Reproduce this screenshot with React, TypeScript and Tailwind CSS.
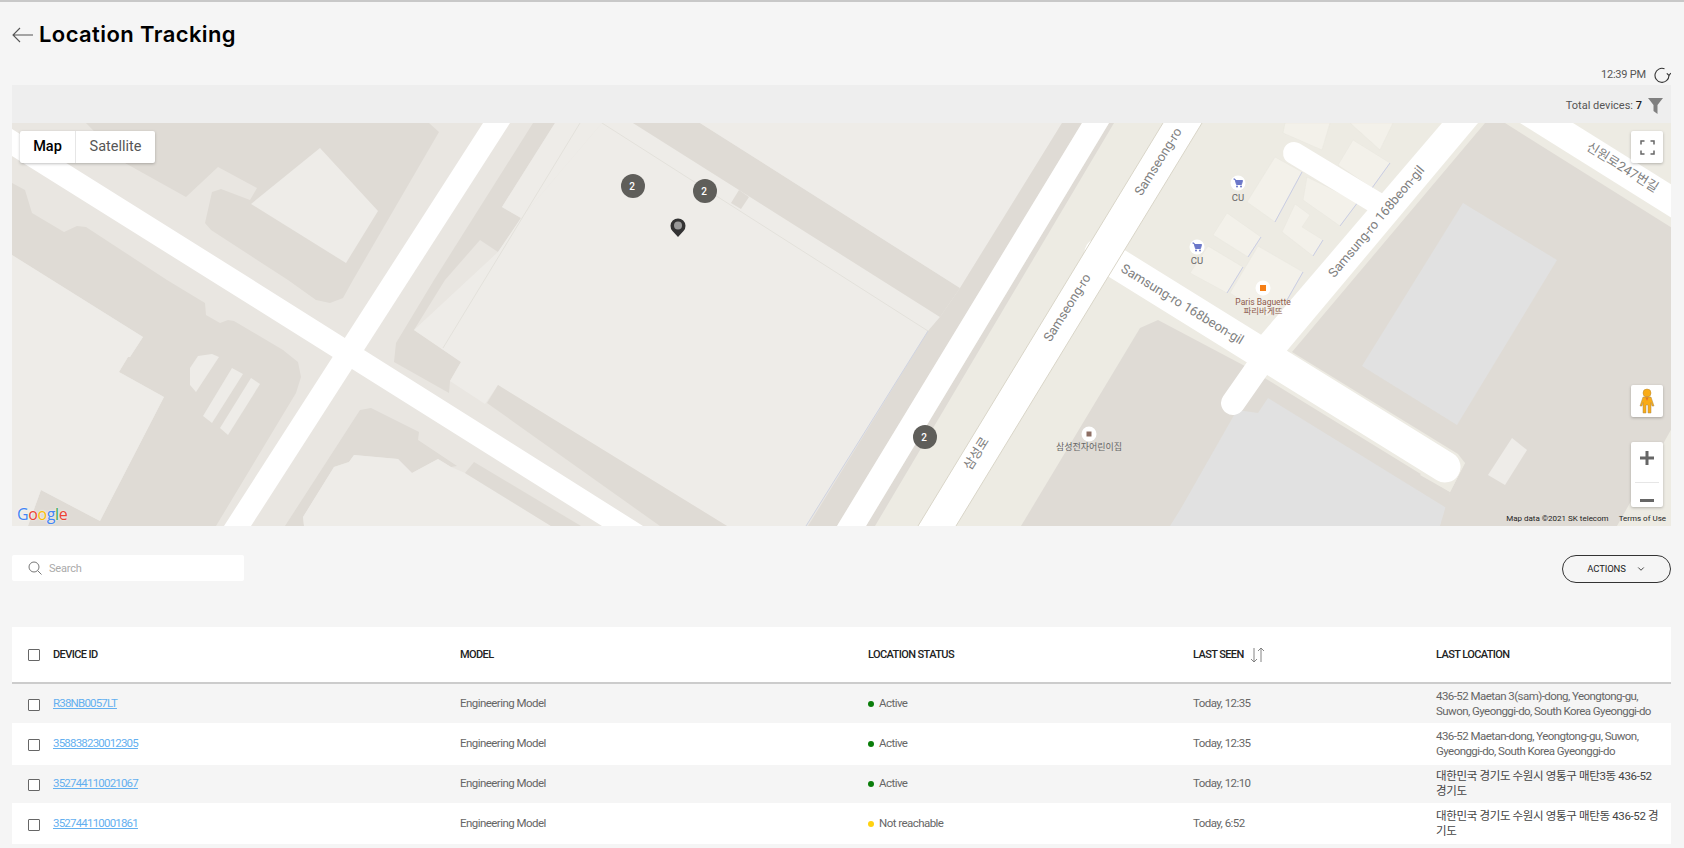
import { ChevronDown } from "lucide-react";

const DARK = "#dfdbd5";
const LIGHT = "#eeece8";
const BASE = "#e9e6e1";
const BLOCK = "#edebe3";
const BUILDING = "#f3f1ea";
const GREY = "#e1e1e1";

const mapShapes: [string, string][] = [
  [DARK, "86,123 429,123 439,132 353,280 343,298 330,303 316,300 288,280 211,230 205,223 212,192 221,189 250,200 257,188 218,167 186,197 125,163"],
  [LIGHT, "320,148 378,211 346,263 251,204"],
  [DARK, "12,183 25,190 32,213 64,232 77,226 86,227 167,280 205,303 206,315 220,323 228,320 234,321 283,350 298,362 301,377 296,393 216,526 28,526 41,490 100,521 164,397 119,372 128,357 130,357 143,337 12,255"],
  [LIGHT, "12,255 143,337 130,357 128,357 119,372 164,397 100,521 41,490 28,526 12,526"],
  [LIGHT, "190,368 198,356 212,354 219,357 196,392 190,385"],
  [LIGHT, "232,368 243,374 212,423 203,416"],
  [LIGHT, "251,378 260,384 228,435 220,428"],
  [DARK, "533,123 555,123 502,207 521,218 498,252 480,240 445,280 414,330 461,362 450,381 449,393 394,362 396,343 434,280"],
  [LIGHT, "555,123 602,123 521,218 502,207"],
  [LIGHT, "602,123 633,123 940,317 928,331 806,526 727,526 498,385 485,404 450,381 461,362 414,330 498,252 521,218"],
  [DARK, "633,123 700,123 960,288 940,317"],
  [DARK, "739,190 731,203 741,209 749,197"],
  [LIGHT, "700,123 1062,123 960,288"],
  [DARK, "1062,123 1082,123 837,526 808,526 928,331 940,317 960,288"],
  [DARK, "498,385 727,526 660,526 487,403"],
  [DARK, "371,408 360,410 285,526 304,526 303,517 334,467 349,462 354,455 398,459 412,473 438,459 451,467 457,466 418,440 419,432"],
  [LIGHT, "304,526 303,517 334,467 349,462 354,455 398,459 412,473 438,459 451,467 465,473 551,526"],
  [DARK, "474,462 465,473 551,526 581,526"],
  [BLOCK, "1109,123 1672,123 1672,526 866,526"],
  [DARK, "1109,123 1114,123 875,526 866,526"],
  [DARK, "1140,328 1158,320 1243,365 1263,377 1450,492 1446,526 1021,526"],
  [GREY, "1237,410 1258,413 1268,398 1453,512 1447,526 1170,526 1180,510"],
  [DARK, "1485,123 1505,123 1672,228 1672,428 1617,526 1440,526 1450,492 1465,463 1458,454 1292,352"],
  [GREY, "1463,203 1557,260 1457,425 1362,366"],
  [LIGHT, "1512,438 1527,450 1505,485 1488,475"],
  [BLOCK, "1440,450 1465,463 1450,492 1420,475"],
];

const buildings = [
  "1275,157 1302,172 1275,222 1247,202",
  "1307,177 1358,202 1340,226 1303,200",
  "1295,204 1310,215 1302,227 1323,240 1313,256 1282,232",
  "1227,213 1261,237 1248,257 1213,235",
  "1208,246 1243,267 1227,293 1190,273",
  "1258,246 1303,272 1287,300 1267,317 1230,293",
  "1285,123 1330,123 1322,150 1283,133",
  "1353,140 1390,163 1372,188 1338,165",
  "1350,123 1393,123 1380,150",
];

// the blue-grey shadow side of the buildings
const buildingShadows = "M1302 172L1275 222M1358 202L1340 226M1243 267L1227 293M1303 272L1287 300M1323 240L1313 256M1261 237L1248 257M1390 163L1372 188";

const roads = [
  "12,129 253,280 643,526 602,526 210,280 12,156",
  "483,123 510,123 251,526 224,526",
  "1082,123 1109,123 866,526 837,526",
  "1163,123 1202,123 956,526 918,526",
  "1442,123 1478,123 1285,353 1260,336",
  "1520,123 1573,123 1672,185 1672,218",
];

const clusters = [
  { x: 633, y: 186 },
  { x: 705, y: 191 },
  { x: 925, y: 437 },
];

const mapLabels = [
  { text: "Samseong-ro", x: 1159, y: 162, angle: -58 },
  { text: "Samseong-ro", x: 1068, y: 308, angle: -58 },
  { text: "Samsung-ro 168beon-gil", x: 1182, y: 305, angle: 31.5 },
  { text: "Samsung-ro 168beon-gil", x: 1377, y: 222, angle: -50 },
  { text: "신원로247번길", x: 1622, y: 168, angle: 32 },
  { text: "삼성로", x: 977, y: 454, angle: -58 },
];

function CartMarker({ x, y }: { x: number; y: number }) {
  return (
    <g transform={`translate(${x} ${y})`}>
      <circle r="7.5" fill="#fff" />
      <path d="M-4.5 -4H-3L-1.5 1.5H3.5L4.5 -2.5H-2.5" fill="#6b77c9" stroke="#6b77c9" strokeWidth="1" />
      <circle cx="-1" cy="3.5" r="1" fill="#6b77c9" />
      <circle cx="3" cy="3.5" r="1" fill="#6b77c9" />
    </g>
  );
}

function MapCanvas() {
  return (
    <svg viewBox="12 123 1659 403" className="block h-[403px] w-full font-['Roboto','Noto_Sans_CJK_KR',sans-serif]">
      <rect x="12" y="123" width="1659" height="403" fill={BASE} />
      {mapShapes.map(([fill, points], i) => (
        <polygon key={i} fill={fill} points={points} />
      ))}
      <path d="M928 331L806 526" stroke="#cfd3e0" strokeWidth="1" fill="none" />
      <path d="M602 123L928 331M580 123L443 348" stroke="#e3e1db" strokeWidth="1" fill="none" />
      {buildings.map((points) => (
        <polygon key={points} points={points} fill={BUILDING} stroke="#e8e6df" strokeWidth="0.5" />
      ))}
      <path d={buildingShadows} stroke="#c9cde4" strokeWidth="1" fill="none" />
      {roads.map((points) => (
        <polygon key={points} points={points} fill="#fff" />
      ))}
      <path d="M1100 253L1445 467" stroke="#fff" strokeWidth="31" strokeLinecap="round" fill="none" />
      <path d="M1270 350L1233 403" stroke="#fff" strokeWidth="24" strokeLinecap="round" fill="none" />
      <path d="M1294 153L1380 205" stroke="#fff" strokeWidth="22" strokeLinecap="round" fill="none" />
      <path d="M1163 123L918 526M1202 123L956 526" stroke="#d9d5c8" strokeWidth="1" fill="none" />

      {mapLabels.map((l) => (
        <text
          key={l.text + l.x}
          x={l.x}
          y={l.y}
          transform={`rotate(${l.angle} ${l.x} ${l.y})`}
          textAnchor="middle"
          dominantBaseline="middle"
          fontSize="13"
          fill="#808080"
        >
          {l.text}
        </text>
      ))}

      <CartMarker x={1238} y={183} />
      <text x="1238" y="201" textAnchor="middle" fontSize="9.5" fill="#666">CU</text>
      <CartMarker x={1197} y={247} />
      <text x="1197" y="264" textAnchor="middle" fontSize="9.5" fill="#666">CU</text>

      <circle cx="1263" cy="288" r="7.5" fill="#fff" />
      <rect x="1260" y="285" width="6" height="6" fill="#f57f17" />
      <text x="1263" y="305" textAnchor="middle" fontSize="8.5" fill="#8d5a4c">Paris Baguette</text>
      <text x="1263" y="314" textAnchor="middle" fontSize="8.5" fill="#8d5a4c">파리바게뜨</text>

      <circle cx="1089" cy="434" r="7.5" fill="#fff" />
      <rect x="1086.5" y="431.5" width="5" height="5" fill="#8d6e63" />
      <text x="1089" y="450" textAnchor="middle" fontSize="9" fill="#666">삼성전자어린이집</text>

      {clusters.map((c) => (
        <g key={c.x}>
          <circle cx={c.x} cy={c.y} r="12" fill="#5f5e5a" />
          <text x={c.x - 1} y={c.y + 3.5} textAnchor="middle" fontSize="10" fontWeight="500" fill="#fff">2</text>
        </g>
      ))}

      <path d="M678 237L672.5 231A7.5 7.5 0 1 1 683.5 231Z" fill="#333" />
      <circle cx="678" cy="225.5" r="4" fill="#999" />
    </svg>
  );
}

function MapControls() {
  return (
    <>
      <div className="absolute left-2 top-2 flex h-8 overflow-hidden rounded-[2px] bg-white text-[14.5px] shadow-[0_1px_3px_rgba(0,0,0,0.25)]">
        <span className="flex w-[56px] items-center justify-center border-r border-[#e6e6e6] font-medium text-black">Map</span>
        <span className="flex w-[79px] items-center justify-center text-[#565656]">Satellite</span>
      </div>

      <div className="absolute left-[1619px] top-2 flex h-8 w-8 items-center justify-center rounded-[2px] bg-white shadow-[0_1px_3px_rgba(0,0,0,0.25)]">
        <svg width="15" height="15" viewBox="0 0 15 15" fill="none" stroke="#666" strokeWidth="1.5">
          <path d="M1 4.5V1H4.5M10.5 1H14V4.5M14 10.5V14H10.5M4.5 14H1V10.5" />
        </svg>
      </div>

      <div className="absolute left-[1619px] top-[262px] flex h-8 w-8 items-center justify-center rounded-[2px] bg-white shadow-[0_1px_3px_rgba(0,0,0,0.25)]">
        <svg width="16" height="26" viewBox="0 0 16 26">
          <circle cx="8" cy="5" r="4" fill="#f9ab16" stroke="#b58a3a" strokeWidth="0.5" />
          <path d="M4 9H12L15 18H13L12 14.5V25H9V17H7V25H4V14.5L3 18H1Z" fill="#f9ab16" stroke="#a98a50" strokeWidth="0.5" />
          <path d="M6.5 9.5H9.5L8 13Z" fill="#e2762a" />
        </svg>
      </div>

      <div className="absolute left-[1619px] top-[319px] flex h-[65px] w-8 flex-col items-center rounded-[2px] bg-white shadow-[0_1px_3px_rgba(0,0,0,0.25)]">
        <div className="flex h-8 items-center justify-center">
          <svg width="14" height="14" viewBox="0 0 14 14" fill="#666">
            <path d="M5.5 0H8.5V5.5H14V8.5H8.5V14H5.5V8.5H0V5.5H5.5Z" />
          </svg>
        </div>
        <div className="mt-2 h-px w-6 bg-[#e6e6e6]" />
        <div className="flex flex-1 items-center justify-center pt-[10px]">
          <div className="h-[3px] w-[14px] bg-[#666]" />
        </div>
      </div>

      <div className="absolute left-[5px] top-[381px] text-[16px] font-medium leading-5 tracking-[-0.4px] [text-shadow:0_0_2px_#fff] font-['Open_Sans',sans-serif]">
        <span className="text-[#4285f4]">G</span>
        <span className="text-[#ea4335]">o</span>
        <span className="text-[#fbbc05]">o</span>
        <span className="text-[#4285f4]">g</span>
        <span className="text-[#34a853]">l</span>
        <span className="text-[#ea4335]">e</span>
      </div>

      <div className="absolute bottom-0 right-[5px] flex gap-[10px] text-[8px] leading-[14px] text-[#222]">
        <span>Map data ©2021 SK telecom</span>
        <span>Terms of Use</span>
      </div>
    </>
  );
}

const columns = "grid grid-cols-[41px_407px_408px_325px_243px_1fr] items-center";

const devices = [
  {
    id: "R38NB0057LT",
    status: "Active",
    dot: "bg-[#0a7d0a]",
    seen: "Today, 12:35",
    location: ["436-52 Maetan 3(sam)-dong, Yeongtong-gu,", "Suwon, Gyeonggi-do, South Korea Gyeonggi-do"],
    locationClass: "text-[#666]",
    row: "h-[39px]",
  },
  {
    id: "358838230012305",
    status: "Active",
    dot: "bg-[#0a7d0a]",
    seen: "Today, 12:35",
    location: ["436-52 Maetan-dong, Yeongtong-gu, Suwon,", "Gyeonggi-do, South Korea Gyeonggi-do"],
    locationClass: "text-[#666]",
    row: "h-[42px] bg-white",
  },
  {
    id: "352744110021067",
    status: "Active",
    dot: "bg-[#0a7d0a]",
    seen: "Today, 12:10",
    location: ["대한민국 경기도 수원시 영통구 매탄3동 436-52", "경기도"],
    locationClass: "text-[#444] tracking-[-0.35px]",
    row: "h-[38px]",
  },
  {
    id: "352744110001861",
    status: "Not reachable",
    dot: "bg-[#ffd20f]",
    seen: "Today, 6:52",
    location: ["대한민국 경기도 수원시 영통구 매탄동 436-52 경", "기도"],
    locationClass: "text-[#444] tracking-[-0.35px]",
    row: "h-[41px] bg-white",
  },
];

function Checkbox({ className = "" }: { className?: string }) {
  return <span className={`ml-4 block h-3 w-3 rounded-[1px] border border-[#666] bg-white ${className}`} />;
}

export default function App() {
  return (
    <div className="h-[848px] overflow-hidden border-t-2 border-[#c8c8c8] bg-[#f5f5f5] pl-3 pr-[13px] font-['Roboto','Noto_Sans_CJK_KR',sans-serif]">
      <div className="mt-[18px] flex h-7 items-center gap-[5px]">
        <svg className="mt-[2px]" width="22" height="16" viewBox="0 0 22 16" fill="none" stroke="#555" strokeWidth="1.1">
          <path d="M21 8H1M8 1L1 8L8 15" />
        </svg>
        <h1 className="text-[22px] font-semibold leading-7 tracking-[0.4px] text-black font-['Inter',sans-serif]">Location Tracking</h1>
      </div>

      <div className="mt-[17px] flex h-5 items-center justify-end pt-px text-[11px] text-[#555]">
        <span className="tracking-[-0.2px]">12:39 PM</span>
        <svg className="ml-[8px]" width="17" height="17" viewBox="0 0 17 17" fill="none" stroke="#333" strokeWidth="1.1">
          <path d="M10.5 1.8A7 7 0 1 0 15 8.5" />
          <path d="M12.8 6.3L15 8.5L16.8 6" />
        </svg>
      </div>

      <div className="flex h-[38px] items-center justify-end bg-[#eeeeee] pr-2 pt-1 text-[11px] text-[#555]">
        <span>
          Total devices: <b className="font-medium text-[#222]">7</b>
        </span>
        <svg className="ml-[6px]" width="15" height="16" viewBox="0 0 15 16" fill="#808080">
          <path d="M0 0H15L9.5 7V16L5.5 13V7Z" />
        </svg>
      </div>

      <div className="relative">
        <MapCanvas />
        <MapControls />
      </div>

      <div className="mt-[29px] flex h-7 items-start justify-between">
        <div className="flex h-[26px] w-[232px] items-center rounded-[2px] bg-white pl-4">
          <svg width="14" height="14" viewBox="0 0 14 14" fill="none" stroke="#777" strokeWidth="1">
            <circle cx="6" cy="6" r="5" />
            <path d="M9.7 9.7L13.5 13.5" />
          </svg>
          <span className="ml-[7px] pt-[2px] text-[11px] tracking-[-0.2px] text-[#aaa]">Search</span>
        </div>
        <button className="flex h-7 w-[109px] items-center justify-center gap-[10px] rounded-full border border-[#333] text-[9.5px] tracking-[-0.1px] text-[#222]">
          ACTIONS
          <ChevronDown size={10} strokeWidth={2} />
        </button>
      </div>

      <div className="mt-11 text-[11.5px] tracking-[-0.55px]">
        <div className={`${columns} h-[57px] border-b-2 border-[#cccccc] bg-white pt-px text-[11px] font-medium tracking-[-0.6px] text-[#222]`}>
          <Checkbox />
          <span>DEVICE ID</span>
          <span>MODEL</span>
          <span>LOCATION STATUS</span>
          <span className="flex items-center gap-[6px]">
            LAST SEEN
            <svg width="15" height="16" viewBox="0 0 15 16" fill="none" stroke="#777" strokeWidth="0.9">
              <path d="M4 1V15M1 12L4 15L7 12M11 15V1M8 4L11 1L14 4" />
            </svg>
          </span>
          <span>LAST LOCATION</span>
        </div>

        {devices.map((d) => (
          <div key={d.id} className={`${columns} ${d.row} text-[#666]`}>
            <Checkbox className="mt-[2px]" />
            <a className="tracking-[-0.8px] text-[#64b0f0] underline">{d.id}</a>
            <span>Engineering Model</span>
            <span className="flex items-center gap-[5px]">
              <span className={`h-[6px] w-[6px] rounded-full ${d.dot}`} />
              {d.status}
            </span>
            <span>{d.seen}</span>
            <div className={`leading-[15px] ${d.locationClass}`}>
              {d.location.map((line) => (
                <div key={line} className="whitespace-nowrap">
                  {line}
                </div>
              ))}
            </div>
          </div>
        ))}
      </div>
    </div>
  );
}
